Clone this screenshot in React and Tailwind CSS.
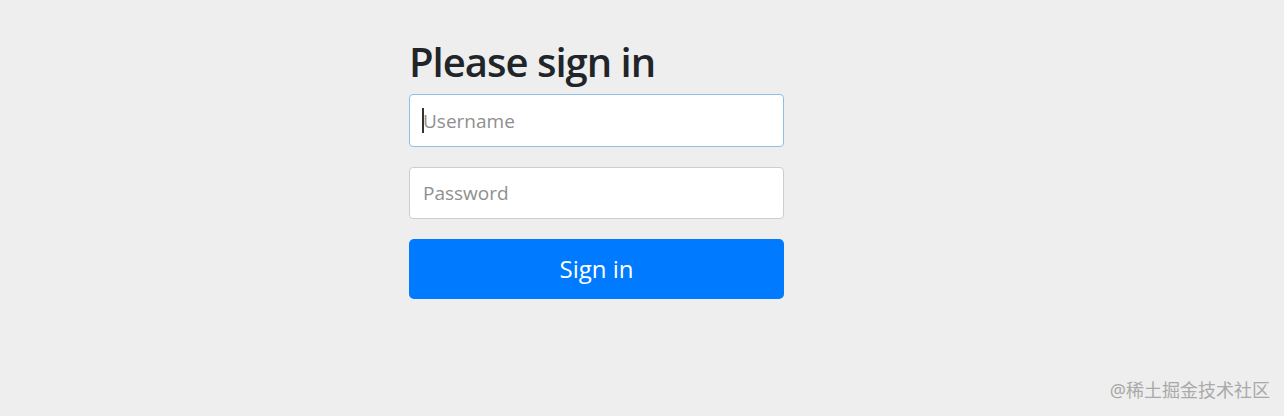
export default function App() {
  return (
    <div className="relative w-[1284px] h-[416px] bg-[#eeeeee] overflow-hidden" style={{ fontFamily: '"Open Sans", "Noto Sans", sans-serif' }}>
      <div className="pl-[409px] pt-[38px]">
        <form className="w-[375px] flex flex-col">
          <h2 className="text-[40px] leading-[48px] font-semibold text-[#212529] mb-[8px] tracking-[-1px]">Please sign in</h2>
          <div className="relative">
            <input
              type="text"
              placeholder="Username"
              className="h-[53px] w-full rounded-[4px] border border-[#8fbfe6] bg-white px-[13px] text-[19px] text-[#495057] placeholder:text-[#8f8f8f] outline-none"
            />
            <span className="absolute left-[13px] top-[14px] h-[25px] w-[2px] bg-[#333]" />
          </div>
          <input
            type="password"
            placeholder="Password"
            className="mt-[20px] h-[52px] w-full rounded-[4px] border border-[#cdcdcd] bg-white px-[13px] text-[19px] text-[#495057] placeholder:text-[#8f8f8f] outline-none"
          />
          <button
            type="button"
            className="mt-[20px] h-[60px] w-full rounded-[5px] bg-[#007bff] text-white text-[24px]"
          >
            Sign in
          </button>
        </form>
      </div>
      <div
        className="absolute right-[14px] bottom-[12px] text-[18px] text-[#a9a9a9]"
        style={{ fontFamily: '"Noto Sans", "Noto Sans CJK SC", sans-serif' }}
      >
        @稀土掘金技术社区
      </div>
    </div>
  );
}
